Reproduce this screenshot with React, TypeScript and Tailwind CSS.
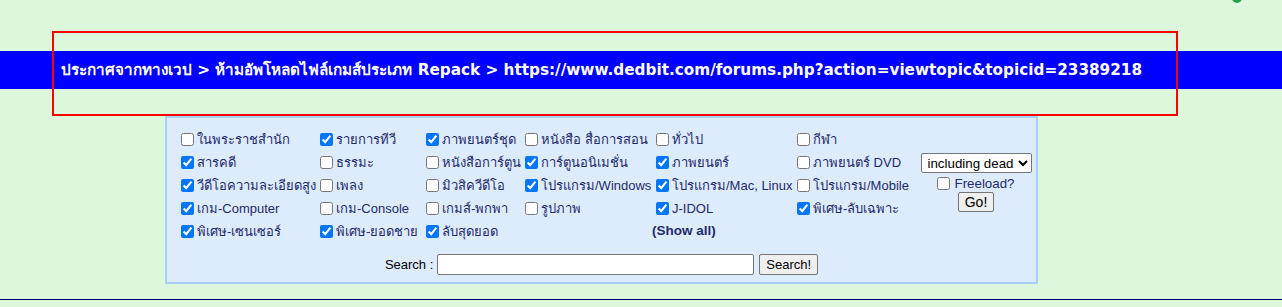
import React from "react";

type Item = { label: string; checked: boolean } | null;

const rows: Item[][] = [
  [
    { label: "ในพระราชสำนัก", checked: false },
    { label: "รายการทีวี", checked: true },
    { label: "ภาพยนตร์ชุด", checked: true },
    { label: "หนังสือ สื่อการสอน", checked: false },
    { label: "ทั่วไป", checked: false },
    { label: "กีฬา", checked: false },
  ],
  [
    { label: "สารคดี", checked: true },
    { label: "ธรรมะ", checked: false },
    { label: "หนังสือการ์ตูน", checked: false },
    { label: "การ์ตูนอนิเมชั่น", checked: true },
    { label: "ภาพยนตร์", checked: true },
    { label: "ภาพยนตร์ DVD", checked: false },
  ],
  [
    { label: "วีดีโอความละเอียดสูง", checked: true },
    { label: "เพลง", checked: false },
    { label: "มิวสิควีดีโอ", checked: false },
    { label: "โปรแกรม/Windows", checked: true },
    { label: "โปรแกรม/Mac, Linux", checked: true },
    { label: "โปรแกรม/Mobile", checked: false },
  ],
  [
    { label: "เกม-Computer", checked: true },
    { label: "เกม-Console", checked: false },
    { label: "เกมส์-พกพา", checked: false },
    { label: "รูปภาพ", checked: false },
    { label: "J-IDOL", checked: true },
    { label: "พิเศษ-ลับเฉพาะ", checked: true },
  ],
  [
    { label: "พิเศษ-เซนเซอร์", checked: true },
    { label: "พิเศษ-ยอดชาย", checked: true },
    { label: "ลับสุดยอด", checked: true },
    null,
    null,
    null,
  ],
];

const colW = ["w-[139px]", "w-[106px]", "w-[99px]", "w-[131px]", "w-[141px]", "w-[124px]"];

function Cell({ item }: { item: Item }) {
  if (!item) return <div className="h-[23px]" />;
  return (
    <label className="flex items-center whitespace-nowrap h-[23px]">
      <input
        type="checkbox"
        defaultChecked={item.checked}
        className="m-0 w-[13px] h-[13px] mr-[3px] accent-[#0075ff]"
      />
      <span>{item.label}</span>
    </label>
  );
}

const arial = { fontFamily: "Arial, 'Liberation Sans', sans-serif" };

export default function App() {
  return (
    <div
      className="relative w-[1282px] h-[307px] bg-[#dcf7dc] overflow-hidden"
      style={{ fontFamily: "Tahoma, 'DejaVu Sans', 'Noto Sans', sans-serif" }}
    >
      {/* top right green fragment */}
      <div className="absolute right-[40px] top-[-8px] w-[10px] h-[11px] rounded-full border-[3px] border-[#22a04a]" />

      <div className="h-[51px]" />
      <div className="h-[38px] bg-[#0000ff] flex items-center pl-[61px] text-white font-bold text-[15.25px] whitespace-nowrap">
        ประกาศจากทางเวป &gt; ห้ามอัพโหลดไฟล์เกมส์ประเภท Repack &gt; https://www.dedbit.com/forums.php?action=viewtopic&amp;topicid=23389218
      </div>

      <div className="h-[27px]" />

      <div
        className="ml-[165px] w-[873px] h-[168px] bg-[#dcecfc] border-2 border-[#a9d0f4] text-[#1f2a6b] text-[13px]"
        style={{ fontFamily: "Tahoma, 'Liberation Sans', 'DejaVu Sans', sans-serif" }}
      >
        <div className="flex pt-[10px] pl-[14px]">
          {colW.map((w, ci) => (
            <div key={ci} className={`${w} flex flex-col`}>
              {rows.map((r, ri) =>
                ci === 4 && ri === 4 ? (
                  <div key={ri} className="h-[23px] flex items-center -ml-[4px] font-bold text-[13.5px]">
                    (Show all)
                  </div>
                ) : (
                  <Cell key={ri} item={r[ci]} />
                )
              )}
            </div>
          ))}
          <div className="flex flex-col items-center pt-[25px] w-[110px]" style={arial}>
            <select
              className="h-[20px] bg-white border border-[#767676] rounded-[2px] text-black text-[13.33px] pl-[2px] pr-[1px]"
              defaultValue="dead"
            >
              <option value="dead">including dead</option>
            </select>
            <label className="flex items-center mt-[3px] text-[13.33px] leading-[15px]">
              <input type="checkbox" className="m-0 w-[13px] h-[13px] mr-[4px]" />
              <span>Freeload?</span>
            </label>
            <button className="mt-[1px] h-[20px] px-[6px] bg-[#efefef] border border-[#767676] rounded-[2px] text-black text-[14px] leading-[16px]">
              Go!
            </button>
          </div>
        </div>
        <div className="flex justify-center items-center mt-[11px]">
          <span className="text-black text-[13px] mr-[4px]">Search :</span>
          <input type="text" className="w-[317px] h-[21px] bg-white border border-[#767676] rounded-[2px]" />
          <button className="ml-[5px] h-[21px] px-[6px] bg-[#efefef] border border-[#767676] rounded-[2px] text-black text-[13px]">
            Search!
          </button>
        </div>
      </div>

      <div className="mt-[15px] h-px bg-[#00006b]" />

      {/* red annotation box */}
      <div className="absolute left-[52px] top-[31px] w-[1126px] h-[85px] border-2 border-[#ff0000] pointer-events-none" />
    </div>
  );
}
